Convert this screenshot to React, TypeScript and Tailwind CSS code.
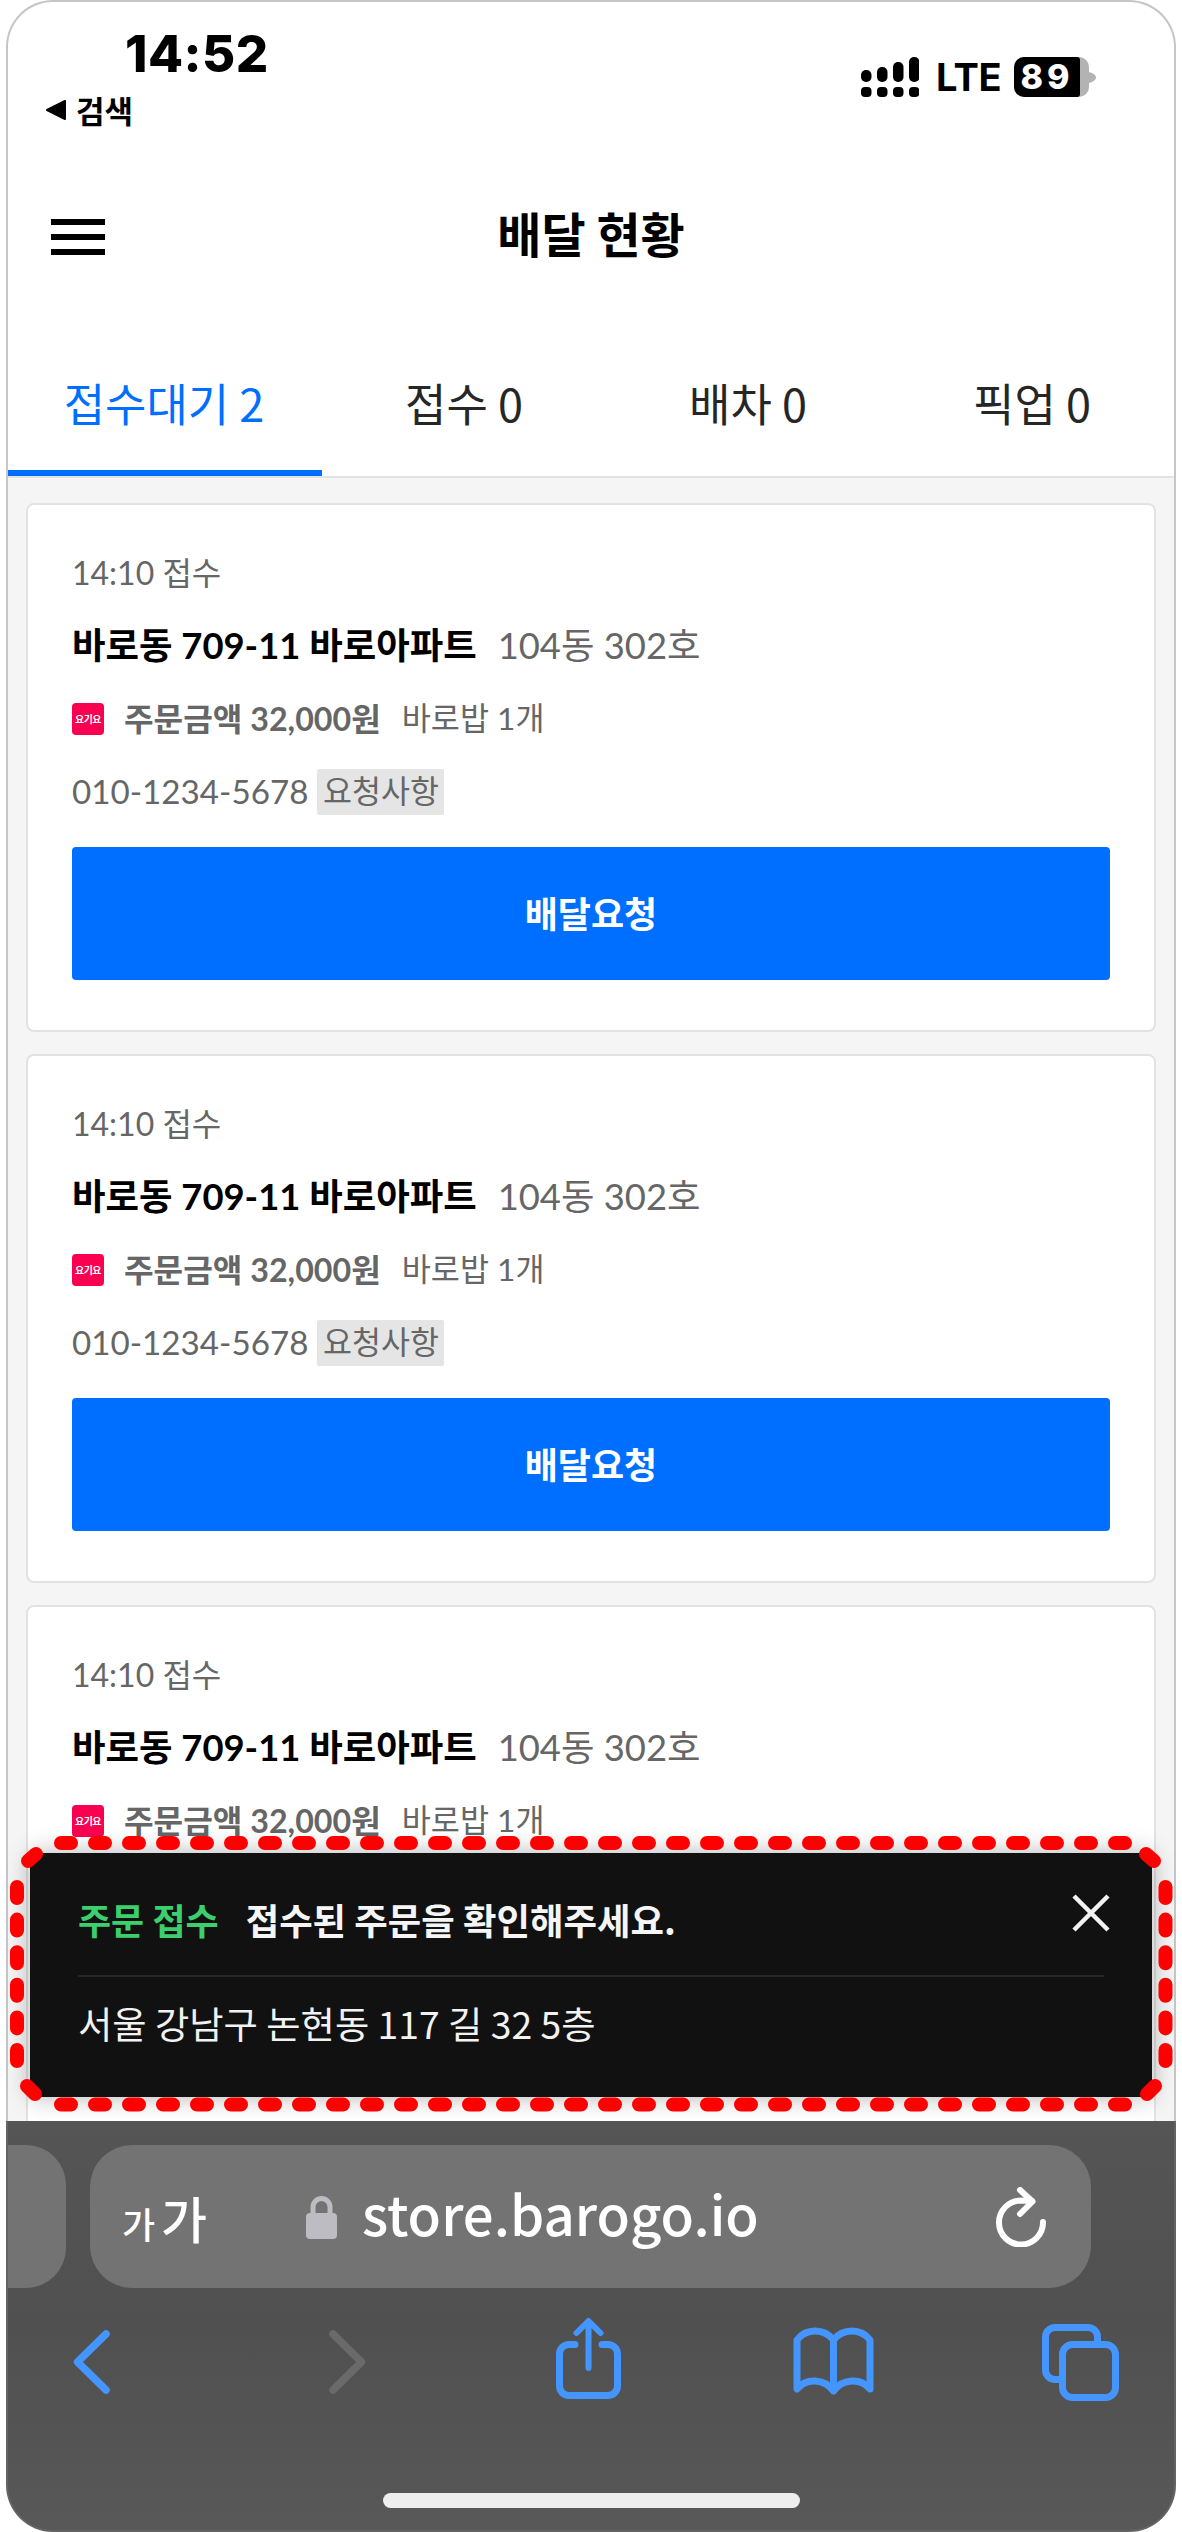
const KR = "font-['Noto_Sans_CJK_KR',sans-serif]";
const LATO = "font-['Lato','Noto_Sans_CJK_KR',sans-serif]";

function Signal() {
  const cols = [
    { top: 13, h: 12 },
    { top: 10, h: 15 },
    { top: 5, h: 20 },
    { top: 0, h: 25 },
  ];
  return (
    <svg width="58" height="40" viewBox="0 0 58 40" className="block">
      {cols.map((c, i) => (
        <g key={i} fill="#000">
          <rect x={i * 16} y={c.top} width="10.5" height={c.h} rx="5" />
          <rect x={i * 16} y="30" width="10.5" height="10" rx="4" />
        </g>
      ))}
    </svg>
  );
}

function Battery() {
  return (
    <div className="flex items-center">
      <div className="relative h-[40px] w-[75px] overflow-hidden rounded-[10px] bg-[#b3b3b3]">
        <div className="flex h-full w-[66px] items-center justify-center rounded-r-[3px] bg-black">
          <span className="font-['Inter',sans-serif] text-[34px] font-extrabold leading-none tracking-[4px] text-white">89</span>
        </div>
      </div>
      <svg width="7" height="11" viewBox="0 0 7 11" className="block">
        <path d="M0 0 C4 1 7 3 7 5.5 C7 8 4 10 0 11 Z" fill="#b3b3b3" />
      </svg>
    </div>
  );
}

function StatusBar() {
  return (
    <div className="flex h-[133px] justify-between">
      <div className="flex flex-col">
        <div className="ml-[117px] mt-[27px] font-['Inter',sans-serif] text-[51px] font-extrabold leading-[50px] tracking-[0.5px] text-black">14:52</div>
        <div className={`ml-[37px] mt-[13px] flex items-center gap-[10px] ${KR}`}>
          <svg width="21" height="20" viewBox="0 0 21 20" className="block">
            <path d="M20 1 V19 L2 10 Z" fill="#000" stroke="#000" strokeWidth="2" strokeLinejoin="round" />
          </svg>
          <span className="text-[31px] font-bold leading-[36px] text-black">검색</span>
        </div>
      </div>
      <div className="mr-[78px] mt-[55px] flex h-[40px] items-center">
        <Signal />
        <span className="ml-[17px] w-[62px] font-['Inter',sans-serif] text-[38px] font-bold leading-none tracking-[-0.5px] text-black">LTE</span>
        <div className="ml-[16px]">
          <Battery />
        </div>
      </div>
    </div>
  );
}

function Nav() {
  return (
    <div className="relative flex h-[196px] items-center justify-center pb-[2px]">
      <div className="absolute left-[43px] top-[84px] flex w-[54px] flex-col gap-[9px]">
        <div className="h-[6px] bg-black" />
        <div className="h-[6px] bg-black" />
        <div className="h-[6px] bg-black" />
      </div>
      <div className={`text-[48px] font-bold leading-[60px] text-black ${KR}`}>배달 현황</div>
    </div>
  );
}

function Tabs() {
  return (
    <div className={`flex h-[147px] border-b-2 border-[#e3e3e3] ${KR}`}>
      <div className="ml-[-2px] flex w-[316px] items-center justify-center border-b-[6px] border-[#006fff] pt-[3px] text-[45px] leading-none text-[#006fff]">접수대기 2</div>
      <div className="flex flex-1 items-center justify-center pb-[3px] text-[45px] leading-none text-[#262626]">접수 0</div>
      <div className="flex flex-1 items-center justify-center pb-[3px] text-[45px] leading-none text-[#262626]">배차 0</div>
      <div className="flex flex-1 items-center justify-center pb-[3px] text-[45px] leading-none text-[#262626]">픽업 0</div>
    </div>
  );
}

function Card() {
  return (
    <div className={`flex h-[529px] shrink-0 flex-col rounded-[8px] border-2 border-[#e2e2e2] bg-white px-[44px] pt-[44px] ${LATO}`}>
      <div className="flex h-[48px] items-center text-[32px] text-[#666]">14:10 접수</div>
      <div className="mt-[24px] flex h-[48px] items-center">
        <span className="text-[36.4px] font-bold text-black">바로동 709-11 바로아파트</span>
        <span className="ml-[21px] text-[36.4px] text-[#666]">104동 302호</span>
      </div>
      <div className="mt-[26px] flex h-[48px] items-center">
        <div className="flex h-[32px] w-[32px] items-center justify-center rounded-[4px] bg-[#fa0050]">
          <span className={`text-[10px] font-bold leading-none tracking-[-0.5px] text-white ${KR}`}>요기요</span>
        </div>
        <span className="ml-[20px] text-[32.2px] font-bold text-[#666]">주문금액 32,000원</span>
        <span className="ml-[21px] text-[31.6px] text-[#666]">바로밥 1개</span>
      </div>
      <div className="mt-[26px] flex h-[46px] items-center">
        <span className="text-[33.2px] text-[#666]">010-1234-5678</span>
        <span className="ml-[9px] flex h-[46px] w-[127px] items-center justify-center rounded-[2px] bg-[#e5e5e5] text-[31.5px] text-[#666]">요청사항</span>
      </div>
      <div className="mt-[32px] flex h-[133px] items-center justify-center rounded-[4px] bg-[#006fff] text-[36px] font-bold text-white">배달요청</div>
    </div>
  );
}

function Toolbar() {
  const blue = "#4595ff";
  return (
    <div className="mt-[30px] flex h-[90px] items-start">
      <svg width="40" height="64" viewBox="70 2330 40 64" className="ml-[62px] mt-[12px] block">
        <path d="M106 2334 L77.5 2362 L106 2390" fill="none" stroke={blue} strokeWidth="7.5" strokeLinecap="round" strokeLinejoin="round" />
      </svg>
      <svg width="40" height="64" viewBox="329 2330 40 64" className="ml-[219px] mt-[12px] block">
        <path d="M333 2334 L361.5 2362 L333 2390" fill="none" stroke="#6a6a6a" strokeWidth="7.5" strokeLinecap="round" strokeLinejoin="round" />
      </svg>
      <svg width="73" height="86" viewBox="552 2316 73 86" className="ml-[183px] mt-[-2px] block">
        <path d="M575 2344.5 H569 A9.5 9.5 0 0 0 559.5 2354 V2386 A9.5 9.5 0 0 0 569 2395.5 H608 A9.5 9.5 0 0 0 617.5 2386 V2354 A9.5 9.5 0 0 0 608 2344.5 H602" fill="none" stroke={blue} strokeWidth="7" strokeLinecap="round" />
        <path d="M588.5 2368 V2322 M576.5 2333 L588.5 2321 L600.5 2333" fill="none" stroke={blue} strokeWidth="6" strokeLinecap="round" strokeLinejoin="round" />
      </svg>
      <svg width="87" height="74" viewBox="790 2325 87 74" className="ml-[165px] mt-[7px] block">
        <path d="M797 2389 V2340 C806 2328 824 2328 833.5 2340 C843 2328 861 2328 870 2340 V2389 C861 2378 843 2378 833.5 2391 C824 2378 806 2378 797 2389 Z M833.5 2340 V2391" fill="none" stroke={blue} strokeWidth="7" strokeLinecap="round" strokeLinejoin="round" />
      </svg>
      <svg width="82" height="82" viewBox="1040 2322 82 82" className="ml-[163px] mt-[4px] block">
        <path d="M1062.5 2379.5 H1055 A9.5 9.5 0 0 1 1045.5 2370 V2337 A9.5 9.5 0 0 1 1055 2327.5 H1088 A9.5 9.5 0 0 1 1097.5 2337 V2344.5" fill="none" stroke={blue} strokeWidth="7" />
        <rect x="1062.5" y="2344.5" width="53" height="53" rx="10" fill="none" stroke={blue} strokeWidth="7" />
      </svg>
    </div>
  );
}

function SafariBar() {
  return (
    <div className="h-[411px] shrink-0 rounded-b-[47px] border-x-2 border-b-2 border-[#636363] bg-linear-to-b from-[#555555] via-[#505050] to-[#585858]">
      <div className="mt-[24px] flex h-[143px] gap-[24px]">
        <div className="h-full w-[58px] rounded-r-[40px] bg-[#737373]" />
        <div className="flex h-full w-[1001px] items-center rounded-[42px] bg-[#737373]">
          <div className={`ml-[32px] flex w-[85px] items-end justify-between font-medium text-white ${KR}`}>
            <span className="text-[36px] leading-[40px]">가</span>
            <span className="text-[50px] leading-[52px]">가</span>
          </div>
          <svg width="31" height="44" viewBox="0 0 31 44" className="ml-[99px] block">
            <path d="M7 20 V12 A8.5 8.5 0 0 1 24 12 V20" fill="none" stroke="#bcbcc2" strokeWidth="5" />
            <rect x="0" y="18" width="31" height="26" rx="4" fill="#bcbcc2" />
          </svg>
          <span className={`ml-[25px] w-[395px] whitespace-nowrap pb-[7px] text-[54.5px] font-medium leading-none text-white ${KR}`}>store.barogo.io</span>
          <svg width="60" height="60" viewBox="991 2183 60 60" className="ml-[234px] block">
            <path d="M1043 2218 A22 22 0 1 1 1021 2196.5 L1032 2197" fill="none" stroke="#fff" strokeWidth="6" strokeLinecap="round" />
            <path d="M1020 2186 L1032.5 2197.5 L1020 2210" fill="none" stroke="#fff" strokeWidth="6" strokeLinecap="round" strokeLinejoin="round" />
          </svg>
        </div>
      </div>
      <Toolbar />
      <div className="mx-auto mt-[85px] h-[15px] w-[417px] rounded-full bg-[#eeeeee]" />
    </div>
  );
}

function Toast() {
  return (
    <div className={`absolute left-[30px] top-[1853px] h-[244px] w-[1122px] rounded-[3px] bg-[#111111] shadow-[0_0_24px_rgba(0,0,0,0.3)] ${KR}`}>
      <div className="relative mx-[48px] flex h-[122px] items-center pt-[10px]">
        <span className="text-[36px] font-bold leading-none text-[#3ccf6e]">주문 접수</span>
        <span className="ml-[27px] text-[36.4px] font-bold leading-none text-[#f5f5f5]">접수된 주문을 확인해주세요.</span>
        <svg width="38" height="38" viewBox="0 0 38 38" className="absolute right-[-6px] top-[41px] block">
          <path d="M2 2 L36 36 M36 2 L2 36" fill="none" stroke="#f2f2f2" strokeWidth="4.5" />
        </svg>
      </div>
      <div className="mx-[48px] h-[2px] bg-[#262626]" />
      <div className="ml-[48px] mt-[24px] flex h-[46px] items-center text-[37.3px] leading-none text-[#f2f2f2]">서울 강남구 논현동 117 길 32 5층</div>
    </div>
  );
}

function Dashes() {
  const red = "#ff0000";
  const dash = { fill: "none", stroke: red, strokeWidth: 14, strokeLinecap: "round" as const };
  return (
    <svg width="1182" height="2532" viewBox="0 0 1182 2532" className="pointer-events-none absolute left-0 top-0 block">
      <path d="M61 1843 H1126" strokeDasharray="10 24" {...dash} />
      <path d="M61 2104.5 H1126" strokeDasharray="10 24" {...dash} />
      <path d="M17 1887 V2061" strokeDasharray="11 21.6" {...dash} />
      <path d="M1165.5 1887 V2061" strokeDasharray="11 21.6" {...dash} />
      <path d="M28 1861 L36 1854" {...dash} />
      <path d="M1154 1861 L1146 1854" {...dash} />
      <path d="M27 2086 L35 2094" {...dash} />
      <path d="M1155 2086 L1147 2094" {...dash} />
    </svg>
  );
}

export default function App() {
  return (
    <div className="relative h-[2532px] w-[1182px] overflow-hidden bg-white">
      <div className="ml-[6px] flex h-[2532px] w-[1170px] flex-col">
        <div className="flex min-h-0 flex-1 flex-col overflow-hidden rounded-t-[47px] border-x-2 border-t-2 border-[#c6c6c6] bg-white">
          <StatusBar />
          <Nav />
          <Tabs />
          <div className="flex min-h-0 flex-1 flex-col gap-[22px] overflow-hidden bg-[#f5f5f5] px-[18px] pt-[25px]">
            <Card />
            <Card />
            <Card />
          </div>
        </div>
        <SafariBar />
      </div>
      <Toast />
      <Dashes />
    </div>
  );
}
